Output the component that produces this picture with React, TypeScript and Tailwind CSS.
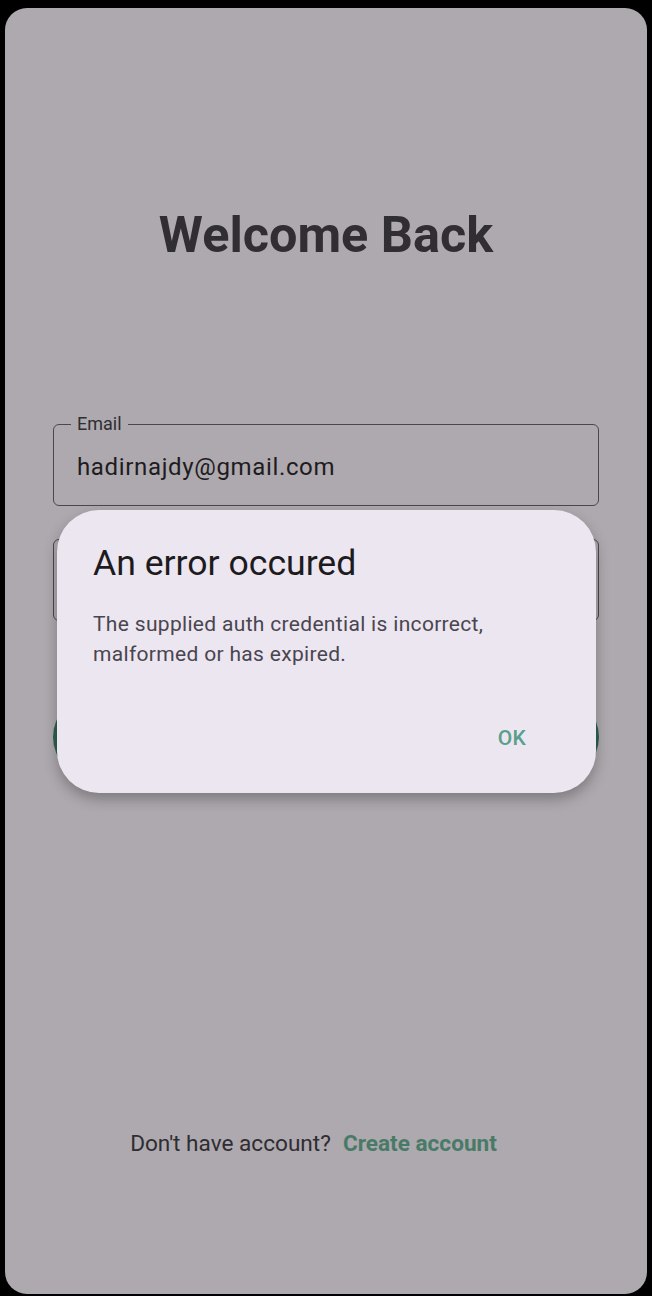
import React from 'react';

const font = { fontFamily: 'Roboto, "Noto Sans", sans-serif' };

const OutlinedField: React.FC<{ label?: string; value?: string; className?: string }> = ({ label, value, className }) => {
  return (
    <div className={`relative h-[82px] rounded-[6px] border border-[#4b484d] flex items-center px-[23px] pt-[3px] ${className || ''}`}>
      {label && (
        <span className="absolute left-[17px] top-[-12px] bg-[#ada9ae] px-[6px] text-[18px] leading-[22px] text-[#2f2d32]">
          {label}
        </span>
      )}
      {value && <span className="text-[24px] tracking-[0.65px] text-[#1e1c20]">{value}</span>}
    </div>
  );
};

const ErrorDialog: React.FC = () => {
  return (
    <div className="absolute left-[52px] top-[502px] w-[539px] h-[283px] rounded-[42px] bg-[#ece6f0] shadow-[0_6px_14px_rgba(0,0,0,0.28)] flex flex-col px-[36px] pt-[29px]">
      <h2 className="text-[35.6px] leading-[48px] text-[#1d1b20]">An error occured</h2>
      <p className="mt-[22px] text-[21px] leading-[30px] tracking-[0.32px] text-[#49454f]">
        The supplied auth credential is incorrect,
        <br />
        malformed or has expired.
      </p>
      <div className="flex justify-end mt-[54px] pr-[34px]">
        <span className="text-[21px] leading-[30px] font-medium tracking-[0.2px] text-[#5a9e8c]">OK</span>
      </div>
    </div>
  );
};

export default function App() {
  return (
    <div className="w-[652px] h-[1296px] bg-black pl-[5px] pt-[8px]" style={font}>
      <div className="relative w-[642px] h-[1286px] rounded-[22px] bg-[#ada9ae] overflow-hidden flex flex-col px-[48px]">
        <h1 className="mt-[200px] h-[54px] leading-[54px] text-center text-[50.4px] font-bold text-[#302e33]">
          Welcome Back
        </h1>

        <OutlinedField label="Email" value="hadirnajdy@gmail.com" className="mt-[162px]" />
        <OutlinedField className="mt-[33px]" />

        <div className="mt-[74px] h-[84px] rounded-full bg-[#2f6053]" />

        <div className="mt-auto mb-[135px] flex justify-center items-center pr-[25px] h-[30px]">
          <span className="text-[22.6px] text-[#2f2d32]">Don't have account?</span>
          <span className="ml-[12px] text-[22.6px] font-bold text-[#497a68]">Create account</span>
        </div>

        <ErrorDialog />
      </div>
    </div>
  );
}
